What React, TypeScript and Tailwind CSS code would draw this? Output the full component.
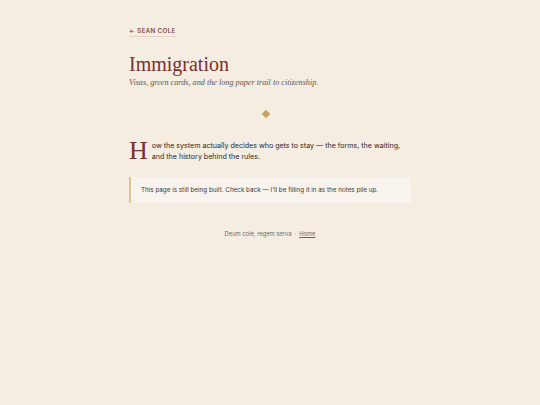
import React from 'react';

const serif = { fontFamily: '"Liberation Serif", "DejaVu Serif", serif' };

export default function App() {
  return (
    <div className="min-h-screen bg-[#f5ede2] text-[#2e2a27]" style={{ fontFamily: 'Inter, "Liberation Sans", sans-serif' }}>
      <main className="mx-auto w-[282px] pt-[15px]">
        {/* Back link */}
        <a className="inline-block border-b border-[#e4d6c6] text-[6.2px] leading-[10px] font-medium uppercase tracking-[0.06em] text-[#6e3232]">
          ← Sean Cole
        </a>

        {/* Header */}
        <h1 className="mt-[13px] text-[20px] leading-[24px] text-[#7a2f2f]" style={serif}>
          Immigration
        </h1>
        <p className="mt-[1px] text-[8.2px] leading-[12px] italic text-[#5e5650]" style={serif}>
          Visas, green cards, and the long paper trail to citizenship.
        </p>

        {/* Ornament */}
        <div className="mt-[22px] flex justify-center pr-[8px]">
          <div className="h-[6px] w-[6px] rotate-45 bg-[#c6a25a]" />
        </div>

        {/* Intro with drop cap */}
        <div className="mt-[23px] flex items-start gap-[4px]">
          <span className="text-[26px] leading-[22px] text-[#7a2f2f]" style={serif}>H</span>
          <p className="text-[7.1px] leading-[11px] text-[#2a2624]">
            ow the system actually decides who gets to stay — the forms, the waiting, and the history behind the rules.
          </p>
        </div>

        {/* Notice */}
        <div className="mt-[15px] border-l-2 border-[#d9c494] bg-[#f8f4ed] px-[10px] py-[8px] text-[6.3px] leading-[10px] text-[#3a3532]">
          This page is still being built. Check back — I'll be filling it in as the notes pile up.
        </div>

        {/* Footer */}
        <footer className="mt-[26px] text-center text-[5.8px] leading-[9px] text-[#6f6862]">
          Deum cole, regem serva
          <span className="mx-[3px] text-[#8f857b]">·</span>
          <a className="underline text-[#8a5a5a]">Home</a>
        </footer>
      </main>
    </div>
  );
}
